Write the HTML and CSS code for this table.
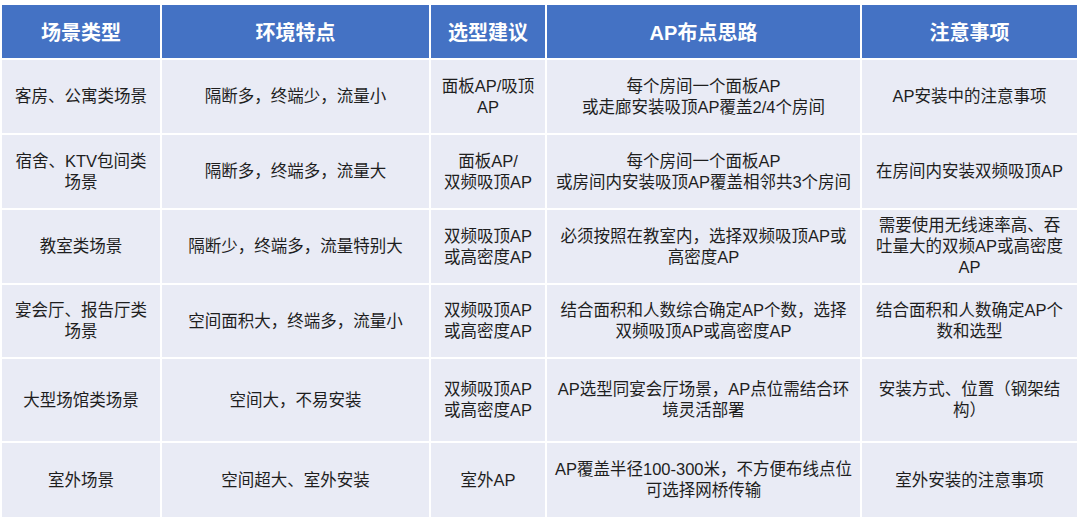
FILE: index.html
```html
<!DOCTYPE html>
<html lang="zh">
<head>
<meta charset="utf-8">
<link rel="stylesheet" href="styles.css">
</head>
<body>
<div class="table">
  <div class="th">场景类型</div>
  <div class="th">环境特点</div>
  <div class="th">选型建议</div>
  <div class="th">AP布点思路</div>
  <div class="th">注意事项</div>

  <div class="td">客房、公寓类场景</div>
  <div class="td">隔断多，终端少，流量小</div>
  <div class="td">面板AP/吸顶<br>AP</div>
  <div class="td">每个房间一个面板AP<br>或走廊安装吸顶AP覆盖2/4个房间</div>
  <div class="td">AP安装中的注意事项</div>

  <div class="td">宿舍、KTV包间类<br>场景</div>
  <div class="td">隔断多，终端多，流量大</div>
  <div class="td">面板AP/<br>双频吸顶AP</div>
  <div class="td">每个房间一个面板AP<br>或房间内安装吸顶AP覆盖相邻共3个房间</div>
  <div class="td">在房间内安装双频吸顶AP</div>

  <div class="td">教室类场景</div>
  <div class="td">隔断少，终端多，流量特别大</div>
  <div class="td">双频吸顶AP<br>或高密度AP</div>
  <div class="td">必须按照在教室内，选择双频吸顶AP或<br>高密度AP</div>
  <div class="td">需要使用无线速率高、吞<br>吐量大的双频AP或高密度<br>AP</div>

  <div class="td">宴会厅、报告厅类<br>场景</div>
  <div class="td">空间面积大，终端多，流量小</div>
  <div class="td">双频吸顶AP<br>或高密度AP</div>
  <div class="td">结合面积和人数综合确定AP个数，选择<br>双频吸顶AP或高密度AP</div>
  <div class="td">结合面积和人数确定AP个<br>数和选型</div>

  <div class="td">大型场馆类场景</div>
  <div class="td">空间大，不易安装</div>
  <div class="td">双频吸顶AP<br>或高密度AP</div>
  <div class="td">AP选型同宴会厅场景，AP点位需结合环<br>境灵活部署</div>
  <div class="td">安装方式、位置（钢架结<br>构）</div>

  <div class="td">室外场景</div>
  <div class="td">空间超大、室外安装</div>
  <div class="td">室外AP</div>
  <div class="td">AP覆盖半径100-300米，不方便布线点位<br>可选择网桥传输</div>
  <div class="td">室外安装的注意事项</div>
</div>
</body>
</html>
```

FILE: styles.css
```css
html, body {
  margin: 0;
  padding: 0;
  background: #ffffff;
}
body {
  width: 1080px;
  height: 520px;
  overflow: hidden;
  font-family: "Liberation Sans", "Noto Sans CJK SC", sans-serif;
}
.table {
  display: grid;
  grid-template-columns: 158px 267px 114px 313px 215px;
  grid-template-rows: 53px 73px 73px 73px 72px 82px 74px;
  gap: 2px;
  margin: 5px 0 0 2px;
  width: 1075px;
}
.th {
  background: #4472c4;
  color: #ffffff;
  font-weight: bold;
  font-size: 20px;
  display: flex;
  align-items: center;
  justify-content: center;
  text-align: center;
}
.td {
  background: #e9ebf5;
  color: #1e1e1e;
  font-size: 16.5px;
  line-height: 21px;
  display: flex;
  align-items: center;
  justify-content: center;
  text-align: center;
}
```
